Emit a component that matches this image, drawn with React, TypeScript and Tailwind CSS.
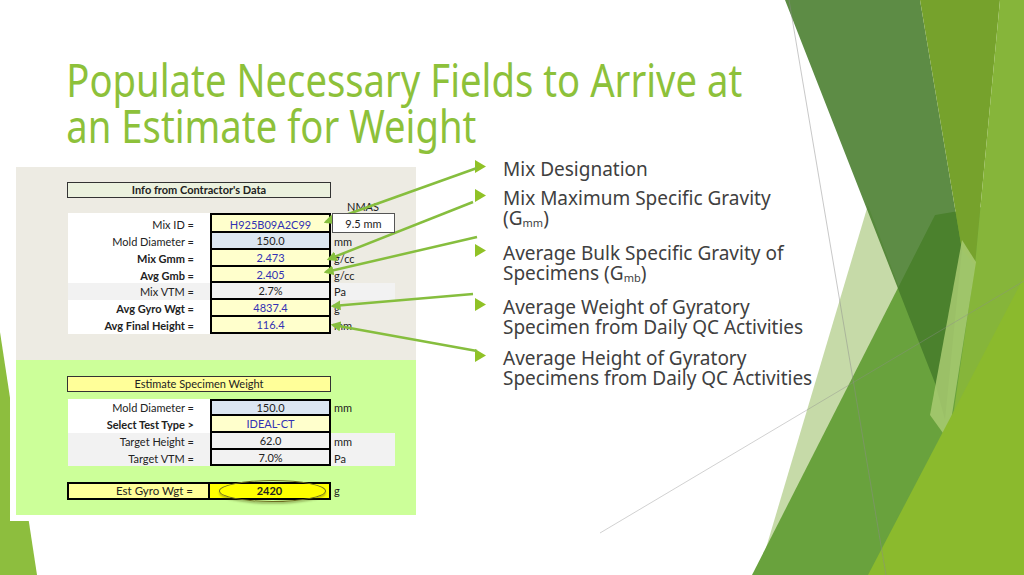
import React from "react";

interface Row {
  label: string;
  value: string;
  bold?: boolean;
  blue?: boolean;
  cell: "yellow" | "blue" | "gray";
  unit?: string;
  grayRow?: boolean;
  nmas?: boolean;
}

const topRows: Row[] = [
  { label: "Mix ID =", value: "H925B09A2C99", blue: true, cell: "yellow", nmas: true },
  { label: "Mold Diameter =", value: "150.0", cell: "blue", unit: "mm" },
  { label: "Mix Gmm =", value: "2.473", bold: true, blue: true, cell: "yellow", unit: "g/cc" },
  { label: "Avg Gmb =", value: "2.405", bold: true, blue: true, cell: "yellow", unit: "g/cc" },
  { label: "Mix VTM =", value: "2.7%", cell: "gray", unit: "Pa", grayRow: true },
  { label: "Avg Gyro Wgt =", value: "4837.4", bold: true, blue: true, cell: "yellow", unit: "g" },
  { label: "Avg Final Height =", value: "116.4", bold: true, blue: true, cell: "yellow", unit: "mm" },
];

const bottomRows: Row[] = [
  { label: "Mold Diameter =", value: "150.0", cell: "blue", unit: "mm" },
  { label: "Select Test Type >", value: "IDEAL-CT", bold: true, blue: true, cell: "yellow" },
  { label: "Target Height =", value: "62.0", cell: "gray", unit: "mm", grayRow: true },
  { label: "Target VTM =", value: "7.0%", cell: "gray", unit: "Pa", grayRow: true },
];

const cellBg = {
  yellow: "bg-[#FFFFCC]",
  blue: "bg-[#DCE6F1]",
  gray: "bg-[#F2F2F2]",
};

function SheetRow({ row, first, tall }: { row: Row; first: boolean; tall?: boolean }) {
  // first row of the top table is taller (20px) in the sheet
  const h = tall ? "h-[20px]" : first ? "h-[17px]" : "h-[16.8px]";
  const lab = tall ? "leading-[23px]" : "leading-[17px]";
  const val = tall ? "leading-[19px]" : first ? "leading-[14px]" : "leading-[16px]";
  return (
    <div className={`flex ${h}`}>
      <div
        className={`w-[142px] shrink-0 pr-[16px] text-right ${lab} ${row.grayRow ? "bg-[#F2F2F2]" : "bg-white"} ${row.bold ? "font-bold" : ""}`}
      >
        {row.label}
      </div>
      <div
        className={`w-[121px] shrink-0 border-x-2 border-b-2 border-black text-center ${val} ${first ? "border-t-2" : ""} ${cellBg[row.cell]} ${row.blue ? "text-[#3232B4]" : "text-[#222]"}`}
      >
        {row.value}
      </div>
      <div className={`relative w-[64px] shrink-0 pl-[3px] ${lab} ${row.grayRow ? "bg-[#F2F2F2]" : ""}`}>
        {row.nmas ? (
          <div className="absolute left-[1px] top-0 z-10 h-[20px] w-[63px] border border-[#555] bg-white text-center leading-[19px]">
            9.5 mm
          </div>
        ) : (
          row.unit
        )}
      </div>
    </div>
  );
}

function Sheet() {
  return (
    <div className="ml-[10px] mt-[16px] h-[356px] w-[408px] shrink-0 bg-white pb-[6px] pl-[6px] pr-[2px] pt-[2px] font-['Lato',sans-serif] text-[11px] text-[#222]">
      <div className="h-[193px] bg-[#EDEBE3] pl-[51px] pt-[15px]">
        <div className="h-[16px] w-[264px] border-[1.5px] border-[#333] bg-[#EBF1DE] text-center font-bold leading-[13px]">
          Info from Contractor's Data
        </div>
        <div className="ml-px flex h-[15px]">
          <div className="w-[263px]" />
          <div className="w-[64px] text-center leading-[18px]">NMAS</div>
        </div>
        <div className="ml-px">
          {topRows.map((r, i) => (
            <SheetRow key={r.label} row={r} first={i === 0} tall={i === 0} />
          ))}
        </div>
      </div>
      <div className="h-[155px] bg-[#CCFF99] pl-[51px] pt-[16px]">
        <div className="h-[16px] w-[264px] border-[1.5px] border-[#333] bg-[#FFFF99] text-center leading-[13px]">
          Estimate Specimen Weight
        </div>
        <div className="ml-px mt-[7px]">
          {bottomRows.map((r, i) => (
            <SheetRow key={r.label} row={r} first={i === 0} />
          ))}
        </div>
        <div className="relative mt-[16px] flex h-[18px]">
          <div className="w-[143px] border-2 border-black bg-[#FFFF99] pr-[15px] text-right text-[11.5px] leading-[14px]">
            Est Gyro Wgt =
          </div>
          <div className="w-[121px] border-y-2 border-r-2 border-black bg-[#FFFF00] text-center font-bold leading-[14px]">
            2420
          </div>
          <div className="pl-[3px] leading-[18px]">g</div>
          <div className="absolute left-[152px] top-[-2px] h-[22px] w-[107px] rounded-[50%] border-[1.5px] border-[#6E6E22] shadow-[0_2px_2px_rgba(60,60,0,0.3)]" />
        </div>
      </div>
    </div>
  );
}

const bullets: React.ReactNode[] = [
  <>Mix Designation</>,
  <>
    Mix Maximum Specific Gravity
    <br />
    (G<sub className="relative top-[2px] text-[11px] leading-none">mm</sub>)
  </>,
  <>
    Average Bulk Specific Gravity of
    <br />
    Specimens (G<sub className="relative top-[2px] text-[11px] leading-none">mb</sub>)
  </>,
  <>
    Average Weight of Gyratory
    <br />
    Specimen from Daily QC Activities
  </>,
  <>
    Average Height of Gyratory
    <br />
    Specimens from Daily QC Activities
  </>,
];

const bulletGap = ["mt-0", "mt-[8px]", "mt-[14px]", "mt-[13px]", "mt-[10px]"];

function Bullets() {
  return (
    <ul className="ml-[57px] mt-[10px] text-[19px] leading-[20.5px] text-[#404040]">
      {bullets.map((b, i) => (
        <li key={i} className={`flex whitespace-nowrap ${bulletGap[i]}`}>
          <svg width="12" height="14" viewBox="0 0 12 14" className="mt-[1px] shrink-0">
            <path d="M0 0 L11 6.5 L0 13 Z" fill="#90C226" />
          </svg>
          <span className="ml-[16px]">{b}</span>
        </li>
      ))}
    </ul>
  );
}

function Decor() {
  return (
    <svg className="absolute inset-0" width="1024" height="575" viewBox="0 0 1024 575">
      {/* left sliver */}
      <path d="M0 332 L37 575 L0 575 Z" fill="#8DBE3E" />
      {/* pale wedge */}
      <path d="M868 205 L935 383 L840 575 L758 575 Z" fill="#C6DAA8" />
      {/* medium */}
      <path d="M752 575 L935 215 L1024 200 L1024 575 Z" fill="#69A23D" />
      {/* dark band */}
      <path d="M785 0 L920 0 L962 250 L945 420 L935 383 Z" fill="#477C2B" fillOpacity="0.88" />
      {/* olive column */}
      <path d="M920 0 L1000 0 L975 265 L962 250 Z" fill="#76A22C" />
      {/* right lime */}
      <path d="M1000 0 L1024 0 L1024 575 L930 575 L975 265 Z" fill="#86B53A" />
      {/* pale lime band */}
      <path d="M962 240 L976 262 L948 440 L930 415 Z" fill="#A9CB72" fillOpacity="0.85" />
      {/* lime triangle */}
      <path d="M868 575 L1024 277 L1024 575 Z" fill="#8BBA2D" />
      {/* thin lines */}
      <line x1="789" y1="0" x2="886" y2="575" stroke="#8c8c8c" strokeOpacity="0.6" strokeWidth="0.8" />
      <line x1="600" y1="533" x2="1024" y2="281" stroke="#8c8c8c" strokeOpacity="0.5" strokeWidth="0.8" />
    </svg>
  );
}

function Arrows() {
  const lines = [
    [477, 168, 326, 222],
    [473, 202, 329, 259],
    [477, 237, 326, 272],
    [473, 294, 333, 306],
    [477, 351, 333, 325],
  ];
  return (
    <svg className="pointer-events-none absolute inset-0" width="1024" height="575" viewBox="0 0 1024 575">
      <defs>
        <marker id="ah" markerWidth="4" markerHeight="4" refX="3" refY="2" orient="auto" markerUnits="strokeWidth">
          <path d="M0 0 L4 2 L0 4 Z" fill="#86BE3E" />
        </marker>
      </defs>
      {lines.map(([x1, y1, x2, y2], i) => (
        <line key={i} x1={x1} y1={y1} x2={x2} y2={y2} stroke="#86BE3E" strokeWidth="2.5" markerEnd="url(#ah)" />
      ))}
    </svg>
  );
}

export default function App() {
  return (
    <div className="relative h-[575px] w-[1024px] overflow-hidden bg-white font-['Noto_Sans',sans-serif]">
      <Decor />
      <div className="relative flex flex-col">
        <h1 className="origin-left scale-x-[0.85] whitespace-nowrap pl-[78px] pt-[57px] text-[45px] font-normal leading-[46px] text-[#8DC13A]">
          Populate Necessary Fields to Arrive at
          <br />
          an Estimate for Weight
        </h1>
        <div className="flex">
          <Sheet />
          <Bullets />
        </div>
      </div>
      <Arrows />
    </div>
  );
}
